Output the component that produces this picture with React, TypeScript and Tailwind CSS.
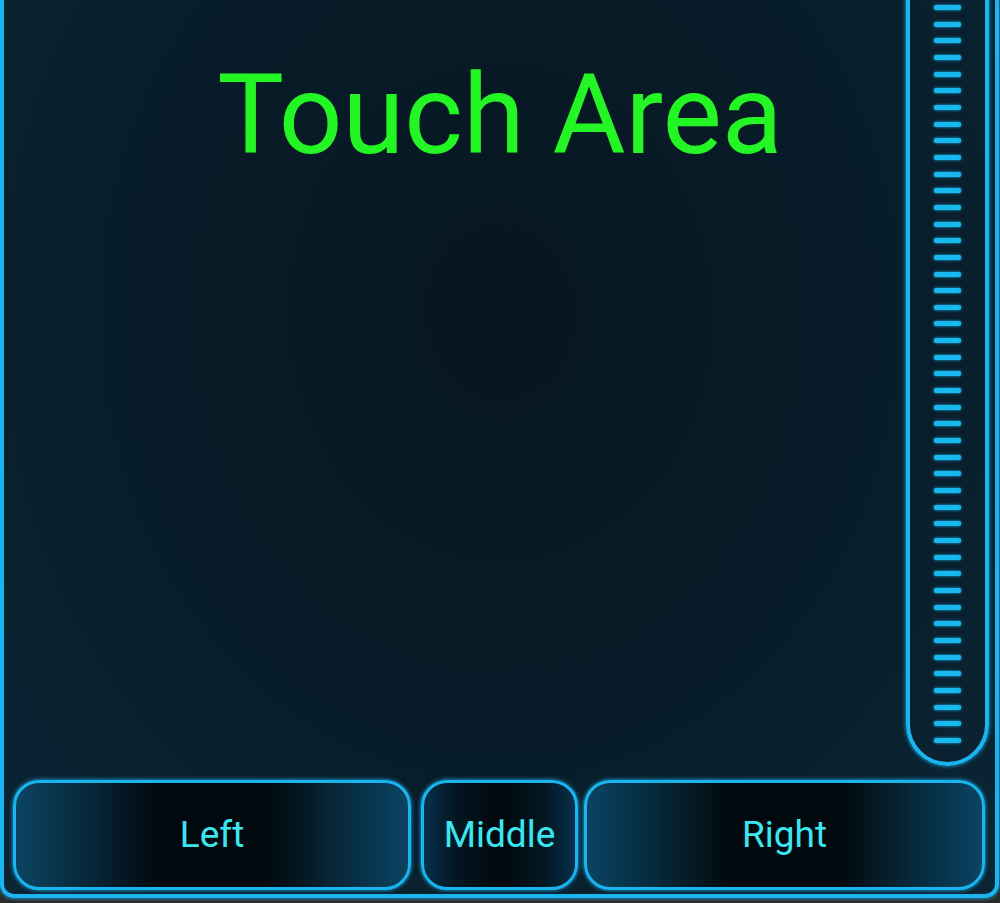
import React from 'react';

const stripes = Array.from({ length: 45 }, (_, i) => i);

const Button: React.FC<{ label: string; className: string }> = ({ label, className }) => (
  <button
    className={`${className} h-[110px] shrink-0 rounded-[26px] border-[3px] border-[#1ab4ee] shadow-[0_0_4px_#1ab4ee] flex items-center justify-center text-[37px] text-[#3ce6f0] font-['Roboto',sans-serif]`}
  >
    {label}
  </button>
);

export default function App() {
  return (
    <div className="w-[1000px] h-[903px] bg-[#2a2a2a] font-['Roboto',sans-serif]">
      <div className="w-[999px] h-[898px] flex flex-col border-x-[4px] border-b-[4px] border-[#1ab4ee] rounded-b-[14px] shadow-[0_0_4px_#1ab4ee] bg-[radial-gradient(ellipse_at_50%_35%,#06161f_0%,#081d2a_55%,#0b2535_100%)]">
        <div className="flex flex-1 min-h-0">
          <div className="flex-1 pl-[90px]">
            <h1 className="mt-[59px] text-center text-[112px] leading-none text-[#24f524] font-normal">
              Touch Area
            </h1>
          </div>
          <div className="w-[83px] mr-[6px] h-[768px] -mt-[2px] shrink-0 rounded-b-[42px] border-x-[4px] border-b-[4px] border-[#1ab4ee] shadow-[0_0_4px_#1ab4ee] flex flex-col items-center pt-[7px] gap-[11.66px] overflow-hidden">
            {stripes.map((i) => (
              <div key={i} className="w-[27px] h-[5px] shrink-0 rounded-[2px] bg-[#1ab8f0] shadow-[0_0_3px_#1ab8f0]" />
            ))}
          </div>
        </div>
        <div className="flex items-center pl-[9px] pb-[4px] pt-[12px]">
          <Button
            label="Left"
            className="w-[398px] bg-[linear-gradient(90deg,#0b4462_0%,#06283a_18%,#01090e_36%,#01090e_64%,#06283a_82%,#0b4462_100%)]"
          />
          <div className="w-[10px]" />
          <Button
            label="Middle"
            className="w-[157px] bg-[linear-gradient(90deg,#07304a_0%,#031621_22%,#01090e_45%,#01090e_55%,#031621_78%,#07304a_100%)]"
          />
          <div className="w-[6px]" />
          <Button
            label="Right"
            className="w-[401px] bg-[linear-gradient(90deg,#0b4462_0%,#06283a_18%,#01090e_36%,#01090e_64%,#06283a_82%,#0b4462_100%)]"
          />
        </div>
      </div>
    </div>
  );
}
